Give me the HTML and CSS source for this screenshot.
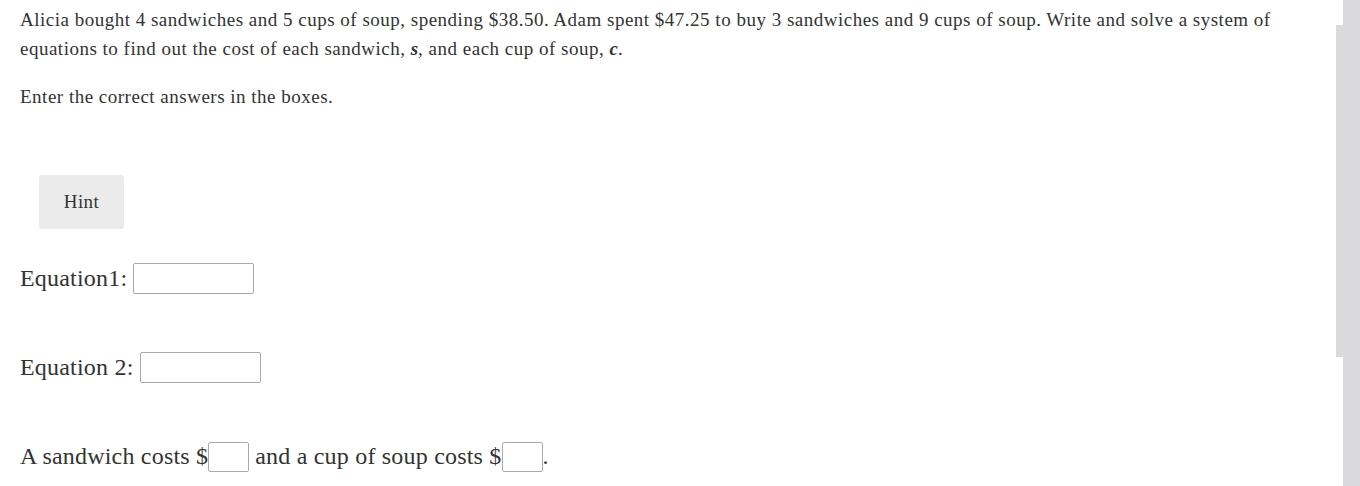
FILE: index.html
```html
<!DOCTYPE html>
<html>
<head>
<meta charset="utf-8">
<link rel="stylesheet" href="styles.css">
</head>
<body>
<div class="page">
  <p class="stem">Alicia bought 4 sandwiches and 5 cups of soup, spending $38.50. Adam spent $47.25 to buy 3 sandwiches and 9 cups of soup. Write and solve a system of equations to find out the cost of each sandwich, <i class="var">s</i>, and each cup of soup, <i class="var">c</i>.</p>
  <p class="instr">Enter the correct answers in the boxes.</p>
  <div class="hint-row"><button class="hint">Hint</button></div>
  <div class="answer eq1"><span>Equation1:</span><span class="box wide"></span></div>
  <div class="answer eq2"><span>Equation 2:</span><span class="box wide"></span></div>
  <div class="answer cost"><span>A sandwich costs $</span><span class="box small"></span><span class="gap">and a cup of soup costs $</span><span class="box small"></span><span>.</span></div>
</div>
<div class="track"></div>
<div class="thumb"></div>
</body>
</html>
```
FILE: styles.css
```css
html, body {
  margin: 0;
  padding: 0;
  background: #fff;
  overflow: hidden;
}
.page {
  padding: 5px 0 0 20px;
  font-family: "Liberation Serif", "Times New Roman", serif;
  color: #333;
}
.stem {
  margin: 0;
  font-size: 19px;
  line-height: 29px;
  letter-spacing: 0.5px;
  width: 1290px;
}
.var {
  font-style: italic;
  font-weight: bold;
  font-family: "Liberation Serif", serif;
  letter-spacing: 0;
}
.instr {
  margin: 19px 0 0 0;
  font-size: 19px;
  line-height: 29px;
  letter-spacing: 0.5px;
}
.hint-row {
  padding: 64px 0 0 19px;
}
.hint {
  display: block;
  width: 85px;
  height: 54px;
  background: #ebebeb;
  border: none;
  border-radius: 3px;
  font-family: "Liberation Serif", serif;
  font-size: 19px;
  letter-spacing: 0.4px;
  color: #333;
  padding: 0;
}
.answer {
  display: flex;
  align-items: center;
  font-size: 24px;
  letter-spacing: 0.2px;
  height: 31px;
}
.eq1 { margin-top: 34px; }
.eq2 { margin-top: 58px; }
.cost { margin-top: 58px; }
.box {
  display: inline-block;
  box-sizing: border-box;
  border: 1px solid #a9a9a9;
  border-radius: 2px;
  background: #fff;
  height: 31px;
}
.box.wide { width: 121px; margin-left: 6px; }
.box.small { width: 41px; height: 30px; }
.gap { margin-left: 6px; }
.track {
  position: absolute;
  top: 0;
  right: 0;
  width: 17px;
  height: 486px;
  background: #dadadc;
}
.thumb {
  position: absolute;
  top: 25px;
  right: 17px;
  width: 7px;
  height: 332px;
  background: #dadadc;
}
```
